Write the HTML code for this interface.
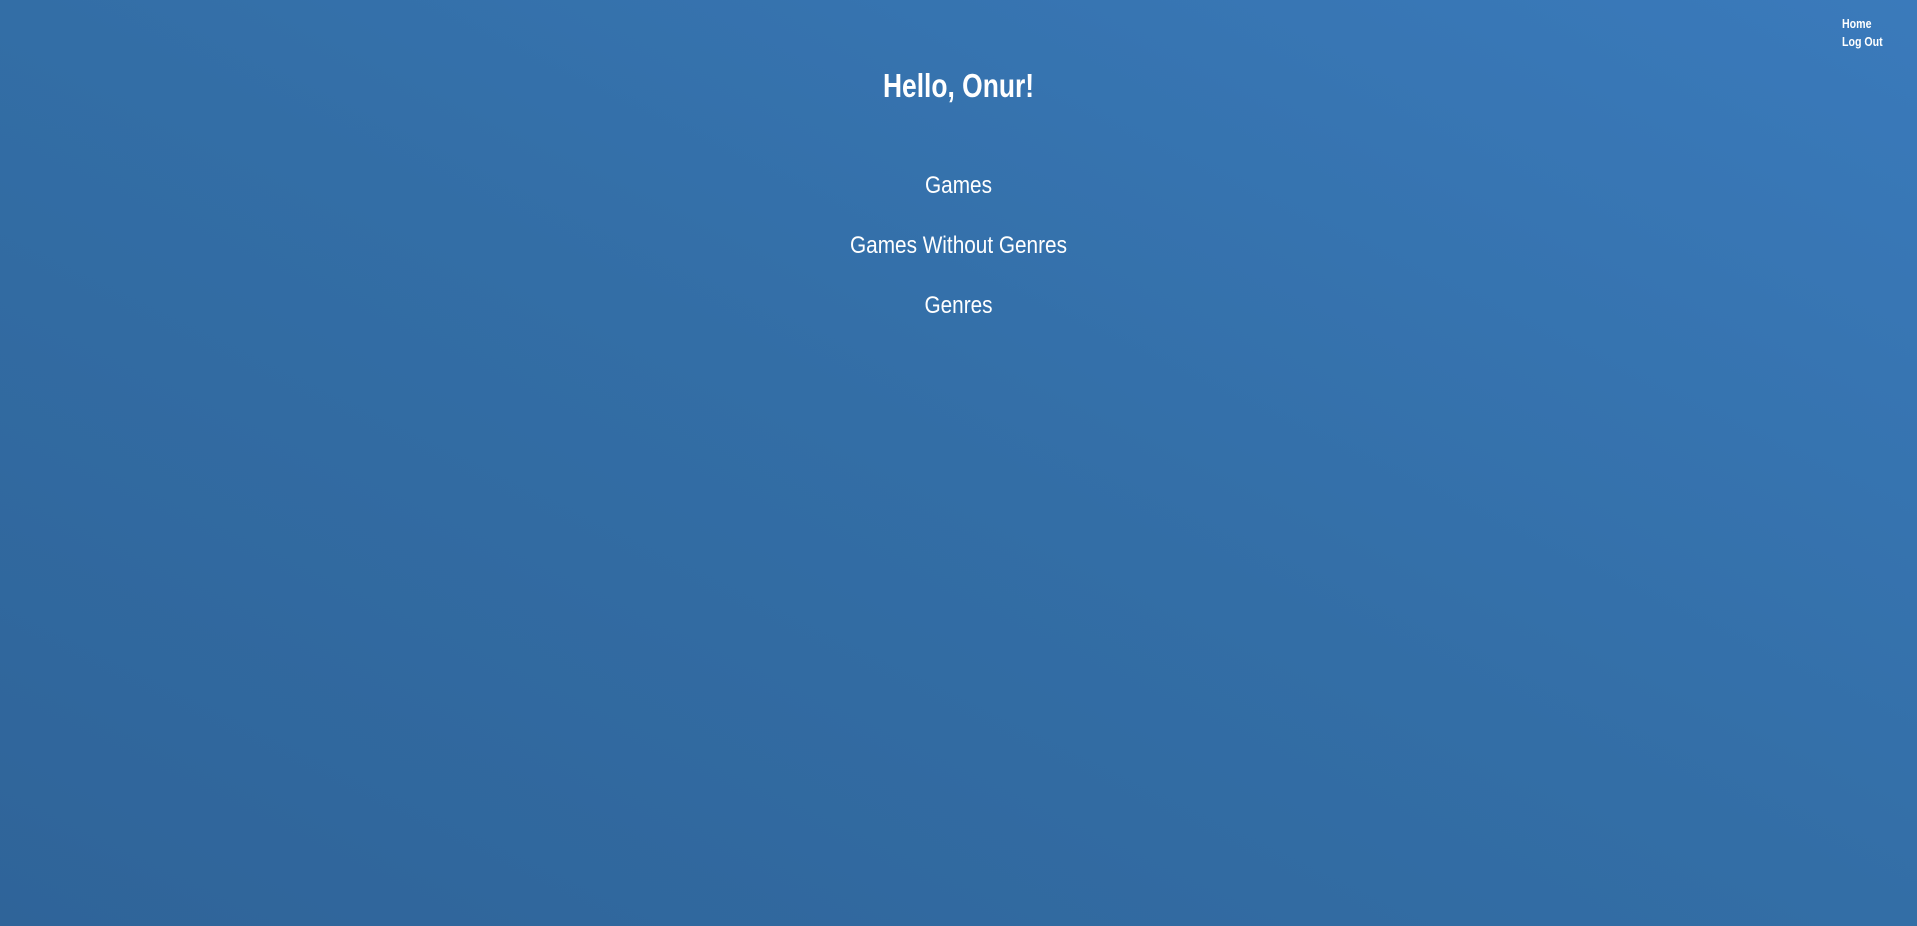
<!DOCTYPE html>
<html><head><meta charset="utf-8"><style>
html,body{margin:0;padding:0;width:1917px;height:926px;overflow:hidden}
body{background:linear-gradient(to top right,#2f6499 0%,#336ea6 50%,#3a7abb 100%);font-family:"Liberation Sans Narrow","Liberation Sans",sans-serif;color:#fff;position:relative}
.t{position:absolute;left:0;width:1917px;text-align:center;white-space:nowrap}
h1{margin:0;font-size:33px;font-weight:bold;top:67px;transform:scaleX(.80)}
.l{font-size:24px;transform:scaleX(.865)}
.nav{position:absolute;left:1842px;top:15px;font-size:12.5px;font-weight:bold;line-height:18px;transform:scaleX(.85);transform-origin:left}
</style></head><body>
<h1 class="t">Hello, Onur!</h1>
<div class="t l" style="top:172px">Games</div>
<div class="t l" style="top:232px">Games Without Genres</div>
<div class="t l" style="top:292px">Genres</div>
<div class="nav">Home<br>Log Out</div>
</body></html>
